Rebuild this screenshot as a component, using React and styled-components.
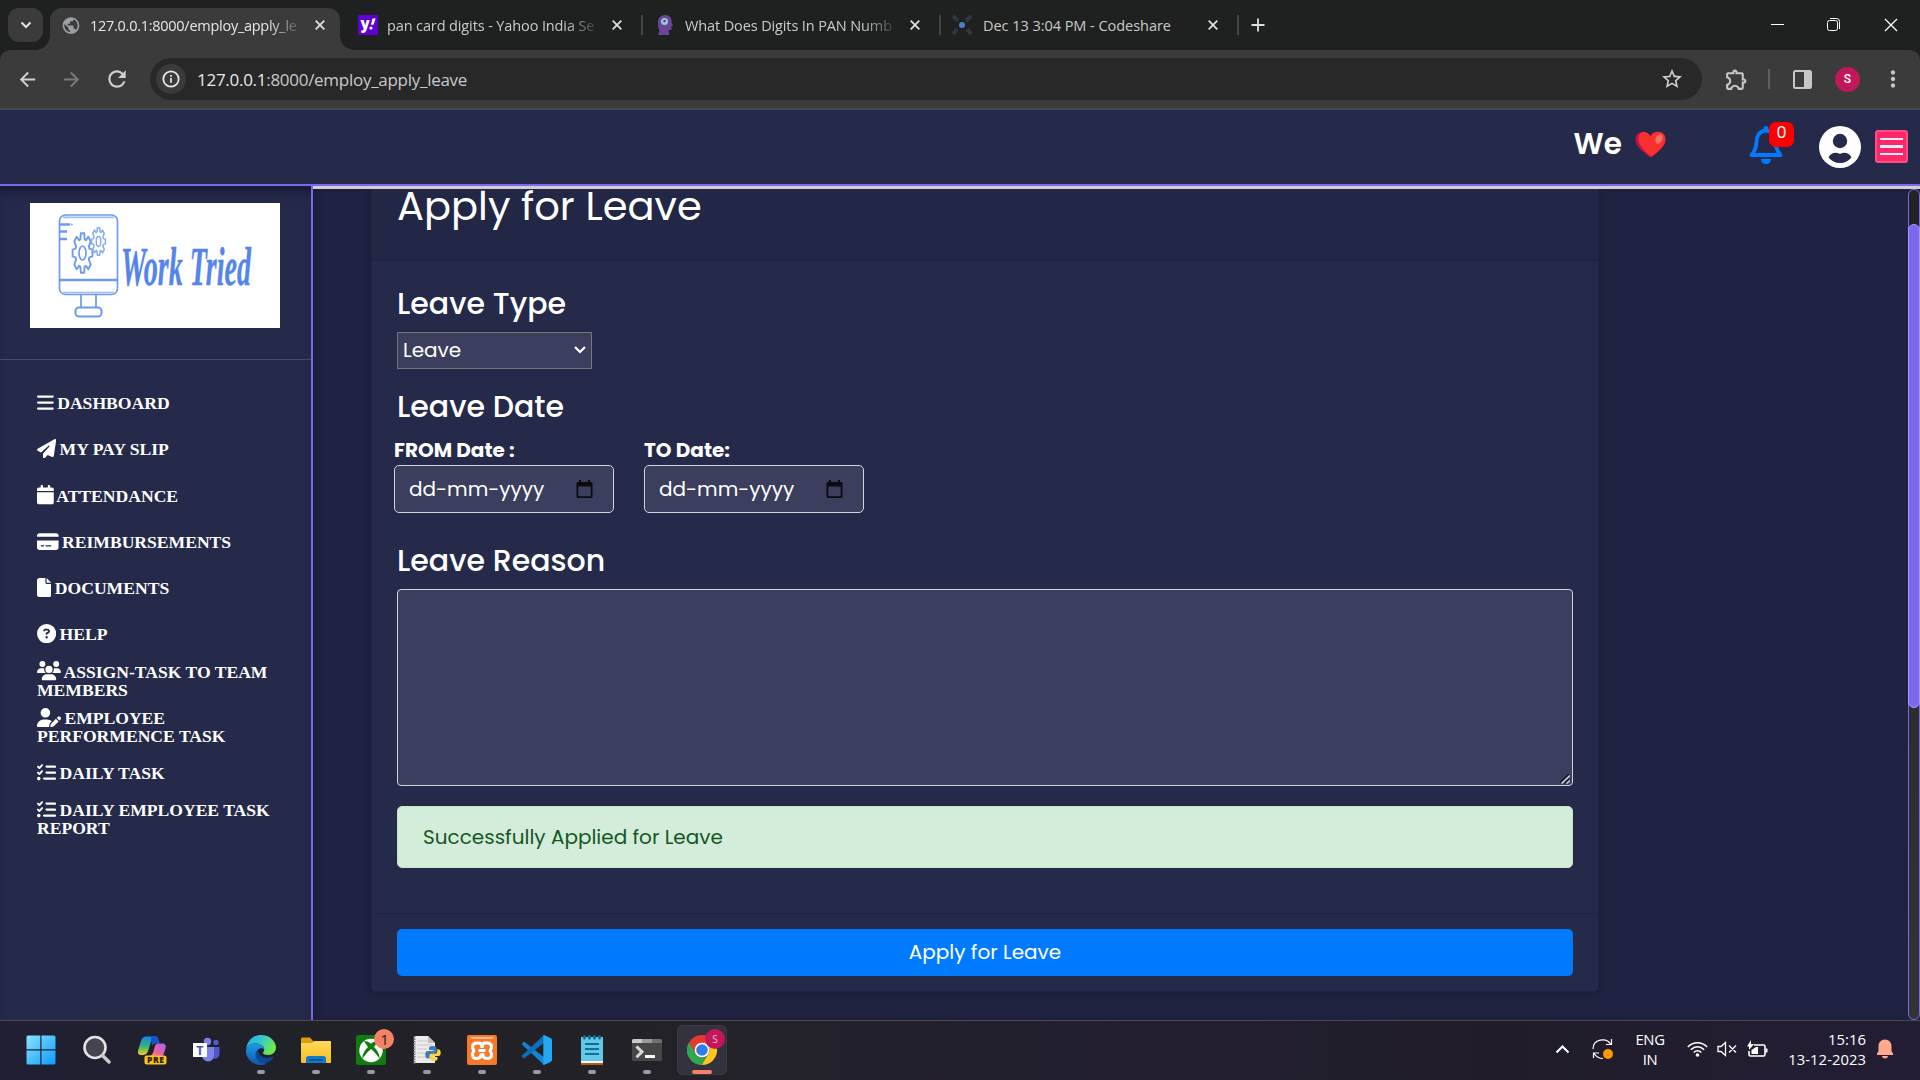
import React from 'react';
import styled, { createGlobalStyle } from 'styled-components';
import { FaBars, FaPaperPlane, FaCalendar, FaCreditCard, FaFile, FaCircleQuestion, FaUsers, FaUserPen, FaListCheck } from 'react-icons/fa6';
import { MdOutlineExtension, MdArrowBack, MdArrowForward, MdRefresh, MdStarOutline, MdMoreVert, MdPublic } from 'react-icons/md';

const ui = `"Segoe UI", "Open Sans", "Noto Sans", sans-serif`;
const poppins = `Poppins, Inter, "Noto Sans", sans-serif`;

const Global = createGlobalStyle`
  *, *::before, *::after { box-sizing: border-box; }
  html, body { margin: 0; overflow: hidden; background: #1f2240; }
  body { font-family: ${poppins}; color: #fff; }
`;
const Screen = styled.div`
  width: 1920px; height: 1080px; display: flex; flex-direction: column; overflow: hidden;
`;

/* ---------- browser chrome ---------- */
const TabStrip = styled.div`
  height: 50px; flex: none; background: #1f2120; display: flex; align-items: flex-start; padding: 8px 0 0 8px; font-family: ${ui};
`;
const TabSearch = styled.div`
  width: 35px; height: 34px; border-radius: 11px; background: #3b3b3b; display: flex; align-items: center; justify-content: center;
`;
const Tab = styled.div`
  position: relative; display: flex; align-items: center; height: ${p => (p.$active ? 42 : 34)}px; width: ${p => p.$w}px; margin-left: ${p => p.$ml || 0}px;
  padding: 0 ${p => p.$pr || 13}px ${p => (p.$active ? 8 : 0)}px 11px; border-radius: 12px 12px 0 0;
  background: ${p => (p.$active ? '#3b3b3b' : 'transparent')};
  &::before, &::after {
    content: ''; display: ${p => (p.$active ? 'block' : 'none')}; position: absolute; bottom: 0; width: 14px; height: 14px;
  }
  &::before { left: -14px; background: radial-gradient(circle at 0 0, transparent 13.5px, #3b3b3b 14px); }
  &::after { right: -14px; background: radial-gradient(circle at 100% 0, transparent 13.5px, #3b3b3b 14px); }
`;
const TabIcon = styled.span`
  flex: none; display: flex; justify-content: center; width: 20px;
`;
const TabTitle = styled.span`
  flex: 1; margin-left: ${p => p.$ml || 9}px; padding-top: 1px; white-space: nowrap; font-size: 14.5px; line-height: 22px; color: ${p => (p.$active ? '#e6e6e6' : '#c9cac9')};
  letter-spacing: ${p => p.$ls || 0}px;
  ${p => p.$fade && 'mask-image: linear-gradient(90deg, #000 calc(100% - 32px), rgba(0,0,0,.12));'}
`;
const CloseSlot = styled.span`
  flex: none; display: flex; width: 12px; margin-left: 15px;
`;
const Separator = styled.span`
  flex: none; width: 2px; height: 20px; margin-top: 7px; background: #414242;
`;
const NewTab = styled.span`
  display: flex; margin: 10px 0 0 12px;
`;
const WindowButtons = styled.div`
  margin-left: auto; display: flex; gap: 43px; padding: 10px 22px 0 0;
`;
const ToolbarBack = styled.div`
  background: #1f2120; flex: none;
`;
const Toolbar = styled.div`
  height: 60px; background: #3b3b3b; border-bottom: 2px solid #474b4e; display: flex; align-items: center; padding: 0 0 0 16px; font-family: ${ui};
  border-radius: 10px 10px 0 0;
`;
const Nav = styled.div`
  flex: none; display: flex; align-items: center; gap: 21px; width: 134px; color: #d0d0d0;
`;
const Omnibox = styled.div`
  flex: none; width: 1552px; height: 42px; border-radius: 21px; background: #282828; display: flex; align-items: center; padding: 0 18px 0 6px;
`;
const SiteInfo = styled.div`
  width: 30px; height: 30px; border-radius: 50%; background: #3b3b3b; display: flex; align-items: center; justify-content: center;
`;
const Url = styled.span`
  flex: 1; margin-left: 11px; padding-top: 1px; font-size: 17px; line-height: 24px; letter-spacing: -0.28px; color: #e8e8e8;
  span { color: #c8c9ca; }
`;
const ToolbarEnd = styled.div`
  flex: none; display: flex; align-items: center; color: #c7c7c7;
`;
const ToolbarSlot = styled.span`
  display: flex; flex: none; margin-left: ${p => p.$ml}px;
`;
const ToolbarRule = styled.span`
  width: 2px; height: 20px; background: #5f5f5f;
`;
const Profile = styled.span`
  width: 25px; height: 25px; border-radius: 50%; background: #c2185b; color: #fff; font: 500 12px/25px Roboto, sans-serif; text-align: center;
`;

/* ---------- application header ---------- */
const Header = styled.header`
  height: 76px; flex: none; background: #252a4b; border-bottom: 2px solid #7b68ee; display: flex; align-items: center; justify-content: flex-end; padding: 0 12px 1px 0;
`;
const Slogan = styled.div`
  display: flex; align-items: center; gap: 13px; font-size: 29.5px; font-weight: 600; line-height: 40px; margin-right: 83px; padding-bottom: 5px;
`;
const BellWrap = styled.div`
  position: relative; width: 34px; height: 42px; margin-right: 36px;
`;
const Badge = styled.span`
  position: absolute; left: 20px; top: -4px; width: 25px; height: 25px; border-radius: 7px; background: #f00; font-size: 16px; line-height: 22px; text-align: center;
`;
const AvatarSlot = styled.div`
  display: flex; margin-right: 14px;
`;
const MenuButton = styled.div`
  width: 33px; height: 33px; border: 2px solid #ff4d88; border-radius: 3px; background: #ff2768; display: flex; flex-direction: column; justify-content: center; align-items: center; gap: 5px;
`;
const MenuBar = styled.span`
  width: 23px; height: 2.5px; background: #d9eef8;
`;

/* ---------- page body ---------- */
const Body = styled.div`
  flex: 1; min-height: 0; display: flex;
`;
const Sidebar = styled.aside`
  width: 313px; flex: none; background: #252a4b; border-right: 2px solid #7b68ee; box-shadow: inset 0 12px 12px -8px rgba(10, 12, 28, 0.6);
`;
const LogoBox = styled.div`
  height: 174px; padding: 17px 0 0 30px; border-bottom: 1px solid #464a5b;
`;
const LogoCard = styled.div`
  width: 250px; height: 125px; background: #fff; display: flex;
`;
const Menu = styled.nav`
  display: grid; grid-auto-rows: 46.25px; padding: 20px 20px 0 37px;
`;
const MenuItem = styled.div`
  display: flex; align-items: center; font: bold 17.6px/18px "Times New Roman", "Liberation Serif", serif; text-transform: uppercase;
  svg { width: ${p => p.$iw}em; height: 1em; font-size: 19.2px; vertical-align: -3px; margin: -4px -1px 0 0; }
`;
const Content = styled.main`
  flex: 1; border-top: 3px solid #d2cfd4; display: flex; background: #1f2240; min-width: 0;
`;
const Scroller = styled.div`
  flex: 1; height: 831px; overflow: hidden; padding-left: 58px; box-shadow: inset 5px 0 6px -3px rgba(20,22,40,.5);
`;
const Card = styled.section`
  width: 1228px; height: 803px; background: #252a4b; border: 1px solid #20253f; border-top: 0; border-radius: 0 0 5px 5px; display: flex; flex-direction: column;
  box-shadow: 0 0 6px rgba(15, 20, 40, .5);
`;
const CardHeader = styled.div`
  height: 72px; flex: none; background: #212744; border-bottom: 1px solid #1c2240; padding-left: 25px;
`;
const Title = styled.h1`
  margin: -7px 0 0; font-size: 40px; font-weight: 400; line-height: 48px; white-space: nowrap;
`;
const CardBody = styled.div`
  flex: 1; padding: 0 25px; display: flex; flex-direction: column;
`;
const SectionTitle = styled.h2`
  margin: ${p => p.$mt}px 0 0 0; font-size: 30px; font-weight: 500; line-height: 36px; white-space: nowrap;
`;
const Select = styled.div`
  width: 195px; height: 37px; margin-top: 10px; border: 1px solid #767676; background: #3b3e5c; display: flex; align-items: center; justify-content: space-between; padding: 0 4px 1px 5px; font-size: 20px;
`;
const Dates = styled.div`
  display: flex; gap: 30px; margin: 11px 0 0 -3px;
`;
const DateField = styled.label`
  width: 220px; display: flex; flex-direction: column; font-size: 20px; font-weight: 700; line-height: 29px;
`;
const DateInput = styled.span`
  height: 48px; border: 1px solid #ced4da; border-radius: 5px; background: #3b3e5c; display: flex; align-items: center; justify-content: space-between; padding: 1px 20px 0 14px; font-size: 20px; font-weight: 400;
`;
const Reason = styled.div`
  height: 197px; margin-top: 10px; border: 1px solid #ced4da; border-radius: 4px; background: #3b3e5c; display: flex; align-items: flex-end; justify-content: flex-end; padding: 1px 2px;
`;
const Alert = styled.div`
  height: 62px; margin-top: 20px; border: 1px solid #c3e6cb; border-radius: 5px; background: #d4edda; color: #155724; font-size: 20px; line-height: 61px; padding-left: 25px;
`;
const CardFooter = styled.div`
  height: 78px; flex: none; border-top: 1px solid #20253f; padding: 15px 25px;
`;
const Submit = styled.button`
  display: block; width: 100%; height: 47px; border: 0; border-radius: 5px; background: #007bff; color: #fff; font-family: ${poppins}; font-size: 20px; line-height: 46px; padding: 0 0 1px;
`;
const ScrollTrack = styled.div`
  width: 12px; height: 831px; border: 1px solid #7b68ee; border-radius: 6px; background: linear-gradient(#222, #333); padding-top: 34px;
`;
const ScrollThumb = styled.div`
  height: 484px; margin: 0 -1px; border: 1px solid #a99cf5; border-radius: 6px; background: #7b68ee;
`;

/* ---------- taskbar ---------- */
const Taskbar = styled.footer`
  height: 60px; flex: none; background: linear-gradient(90deg, #201f34 0%, #212128 15%, #232228 35%, #231f30 60%, #201d28 78%, #231d35 100%); border-top: 1px solid #4a4a4d; display: flex; padding-left: 16px; font-family: ${ui};
`;
const TaskApp = styled.div`
  position: relative; width: 50px; height: 50px; margin: 4px 5.08px 0 0; border-radius: 6px; display: flex; align-items: center; justify-content: center;
  background: ${p => (p.$active ? '#33323e' : 'transparent')};
  box-shadow: ${p => (p.$active ? 'inset 0 0 0 1px #3b3a45' : 'none')};
  &::after {
    content: ''; position: absolute; bottom: 1px; left: 50%; transform: translateX(-50%); height: 4px; border-radius: 2px;
    width: ${p => (p.$active ? 20 : p.$open ? 8 : 0)}px; background: ${p => (p.$active ? '#f58166' : '#9a9aa0')};
  }
`;
const AppBadge = styled.span`
  position: absolute; left: 28px; top: 4px; width: 20px; height: 20px; border-radius: 50%; background: ${p => p.$bg}; color: ${p => p.$fg}; font-size: ${p => p.$fs}px; line-height: 20px; text-align: center;
`;
const Tray = styled.div`
  margin-left: auto; display: flex; align-items: center; padding: 0 27px 3px 0;
`;
const TrayText = styled.div`
  font-size: 14.8px; line-height: 20px; text-align: ${p => p.$align}; width: ${p => p.$w}px; margin-right: ${p => p.$mr}px; letter-spacing: ${p => p.$ls}px; white-space: nowrap;
`;
const TraySlot = styled.span`
  display: flex; margin-right: ${p => p.$mr}px;
`;

const Cross = ({ size = 10, sw = 1.8, color = '#dedede' }) => (
  <svg width={size} height={size} viewBox="0 0 10 10"><path d="M.7.7l8.6 8.6M9.3.7L.7 9.3" stroke={color} strokeWidth={sw} fill="none" /></svg>
);

const gearPath = (cx, cy, rx, ry) => {
  const pts = [];
  for (let i = 0; i < 8; i++) {
    [[-0.3, 0.72], [-0.17, 1], [0.17, 1], [0.3, 0.72]].forEach(([o, r]) => {
      const a = (i * Math.PI) / 4 + o;
      pts.push(`${(cx + Math.sin(a) * rx * r).toFixed(1)} ${(cy - Math.cos(a) * ry * r).toFixed(1)}`);
    });
  }
  return `M${pts.join('L')}Z`;
};

const Logo = () => (
  <svg width="250" height="125" viewBox="0 0 250 125" fill="none" stroke="#6d9bee" strokeWidth="1.700">
    <rect x="29.500" y="12" width="58" height="79.500" rx="6" />
    <path d="M33 14.300h51M33 89.500h51" stroke="#9dbcf5" />
    <path d="M30 77h57" strokeWidth="2.400" />
    <path d="M30 21.500h10M30 28.500h7M30 36h7" strokeWidth="2.400" />
    <circle cx="41.800" cy="21.500" r=".6" strokeWidth="1" />
    <path d="M51 92v12M66 92v12" />
    <rect x="45.500" y="104.500" width="26" height="9" rx="3.500" strokeWidth="2" />
    <path d={gearPath(52.5, 50, 10, 20)} strokeLinejoin="round" strokeWidth="1.900" />
    <ellipse cx="52.500" cy="50" rx="3.500" ry="7" />
    <path d={gearPath(68.5, 38.5, 7, 14)} strokeLinejoin="round" stroke="#86abf1" strokeWidth="1.500" />
    <ellipse cx="68.500" cy="38.500" rx="2.300" ry="5" stroke="#86abf1" strokeWidth="1.400" />
    <text x="91" y="82" textLength="130" lengthAdjust="spacingAndGlyphs" fill="#5585ea" stroke="#5585ea" strokeWidth=".4" fontFamily="'Liberation Serif', serif" fontStyle="italic" fontWeight="700" fontSize="54">Work Tried</text>
  </svg>
);

const menu = [
  [FaBars, 0.875, 'Dashboard'],
  [FaPaperPlane, 1, 'My Pay Slip'],
  [FaCalendar, 0.875, 'Attendance'],
  [FaCreditCard, 1.125, 'Reimbursements'],
  [FaFile, 0.75, 'Documents'],
  [FaCircleQuestion, 1, 'Help'],
  [FaUsers, 1.25, 'Assign-Task to Team Members'],
  [FaUserPen, 1.25, 'Employee Performence Task'],
  [FaListCheck, 1, 'Daily Task'],
  [FaListCheck, 1, 'Daily Employee Task Report'],
];

const CalendarGlyph = () => (
  <svg width="17" height="19" viewBox="0 0 17 19"><path d="M3 0h2v2h7V0h2v2h1a1.500 1.500 0 0 1 1.500 1.500v13A1.500 1.500 0 0 1 15 18H2a1.500 1.500 0 0 1-1.500-1.500v-13A1.500 1.500 0 0 1 2 2h1zM2.300 6.500v9.800h12.400V6.500z" fill="#0b0b10" fillRule="evenodd" /></svg>
);

const WindowsIcon = () => (
  <svg width="30" height="30" viewBox="0 0 30 30">
    <defs><linearGradient id="win" x1="0" y1="0" x2="1" y2="1"><stop offset="0" stopColor="#8be3ff" /><stop offset="1" stopColor="#0a9bff" /></linearGradient></defs>
    <path d="M2 .5h12.300v13.800H.5V2A1.500 1.500 0 0 1 2 .5zM15.500.5H28A1.500 1.500 0 0 1 29.500 2v12.300h-14zM.5 15.500h13.800v14H2A1.500 1.500 0 0 1 .5 28zM15.500 15.500h14V28a1.500 1.500 0 0 1-1.500 1.500H15.500z" fill="url(#win)" />
  </svg>
);
const SearchIcon = () => (
  <svg width="30" height="30" viewBox="0 0 30 30" fill="none"><circle cx="14" cy="12.500" r="10.500" fill="#46454f" stroke="#e4e4e6" strokeWidth="2.600" /><path d="M21.500 20.500l6.500 6.500" stroke="#c9c9cd" strokeWidth="3.500" strokeLinecap="round" /></svg>
);
const CopilotIcon = () => (
  <svg width="32" height="32" viewBox="-2 0 32 32">
    <defs>
      <linearGradient id="cpA" x1="0" y1="0" x2="0" y2="1"><stop offset="0" stopColor="#1688e8" /><stop offset=".5" stopColor="#2fb07e" /><stop offset="1" stopColor="#f4cf1a" /></linearGradient>
      <linearGradient id="cpB" x1="1" y1="0" x2="0" y2="1"><stop offset="0" stopColor="#a066f5" /><stop offset=".6" stopColor="#ef5fa0" /><stop offset="1" stopColor="#ffa04d" /></linearGradient>
    </defs>
    <path d="M9 2.500h10c-4 0-5 5-6.500 10S10 21 6 21H4c-3 0-3.500-2.500-2.800-5L4 7c1-3 2.500-4.500 5-4.500z" fill="url(#cpA)" />
    <path d="M12 2h6c2.500 0 3.200 2 4 4.500l.8 3h-4c-2 0-3 1-3.500 2.500C14 7 15 4 12 2z" fill="#1556c8" />
    <path d="M20 9.500h5.500c3 0 3.800 2.500 3 5L26 22H12c3.500 0 4-3 5-6.500s1.500-6 3-6z" fill="url(#cpB)" />
    <rect x="7.500" y="21.500" width="22" height="9" rx="2" fill="#fcc419" />
    <text x="10" y="29" fontFamily="'Open Sans', sans-serif" fontWeight="800" fontSize="8.500" textLength="17" fill="#2a2108">PRE</text>
  </svg>
);
const TeamsIcon = () => (
  <svg width="30" height="30" viewBox="0 0 30 30">
    <circle cx="16.500" cy="6.500" r="3.700" fill="#7b83eb" /><circle cx="25" cy="7.500" r="2.700" fill="#5059c9" />
    <path d="M21 12h7.500v7.500a5 5 0 0 1-7.500 3.500z" fill="#5059c9" /><path d="M11 12h12v8a6 6 0 0 1-12 1z" fill="#7b83eb" />
    <rect x="2" y="8" width="14" height="14" fill="#fff" /><text x="5.300" y="19.500" fontFamily="'Open Sans', sans-serif" fontWeight="700" fontSize="12.500" fill="#4b53bc">T</text>
  </svg>
);
const EdgeIcon = () => (
  <svg width="30" height="30" viewBox="0 0 30 30">
    <defs>
      <linearGradient id="edA" x1="0" y1="0" x2="1" y2=".4"><stop offset="0" stopColor="#25a9e8" /><stop offset=".5" stopColor="#35c6d0" /><stop offset="1" stopColor="#6bea4e" /></linearGradient>
      <linearGradient id="edB" x1="0" y1="0" x2="0" y2="1"><stop offset="0" stopColor="#1c9be6" /><stop offset="1" stopColor="#0f55a8" /></linearGradient>
    </defs>
    <path d="M.2 14C1 6 7 0 15 0c9 0 15 6.500 15 12.500 0 4.500-3.500 7.500-7.500 7.500-3.500 0-5.500-1-5.500-2.300 0-.8 1.200-1.400 1.200-3.200C18.200 11 14.500 8.500 10 8.500 5 8.500 1.500 10.500.2 14z" fill="url(#edA)" />
    <path d="M0 16c0-4.500 4-7.500 10-7.500 5 0 8.200 3 8.200 6-2-2.500-7.700-1.500-7.700 4.500 0 5 4.500 9.500 10 9.500-1.700 1-3.600 1.500-5.500 1.500C6.500 30 0 23.500 0 16z" fill="url(#edB)" />
    <path d="M12.500 14c-3.500 2-4 7-1 11 3.500 4.700 11.500 4.500 16-2.500.5-.8-.2-1-.8-.7-5 2.200-12.500.7-14-3.300-.6-1.600-.5-3-.2-4.500z" fill="#0d4896" />
  </svg>
);
const FolderIcon = () => (
  <svg width="30" height="30" viewBox="0 0 30 30">
    <defs><linearGradient id="fo" x1="0" y1="0" x2="0" y2="1"><stop offset="0" stopColor="#ffd95c" /><stop offset="1" stopColor="#f9bd22" /></linearGradient></defs>
    <path d="M0 4a1.500 1.500 0 0 1 1.500-1.500H9l3.500 4H30V12H0z" fill="#dd9d0d" /><path d="M0 8h11l2.500-2H29a1 1 0 0 1 1 1v21H1a1 1 0 0 1-1-1z" fill="url(#fo)" />
    <path d="M5 28v-4.500a2.500 2.500 0 0 1 2.500-2.500h15a2.500 2.500 0 0 1 2.500 2.500V28z" fill="#1379cb" /><path d="M8.500 24.800h13" stroke="#0a4b86" strokeWidth="1.500" />
  </svg>
);
const XboxIcon = () => (
  <svg width="30" height="30" viewBox="0 0 30 30">
    <rect width="30" height="30" rx="2" fill="#107c10" /><circle cx="15" cy="15.500" r="11.700" fill="#fff" />
    <path d="M8 6.500c3-.8 5 .5 7 2.300 2-1.800 4-3.100 7-2.300l-4 5.500c4 4 6 8.500 5.500 11.500-2-3-5-6.500-8.500-9.500-3.500 3-6.500 6.500-8.500 9.500C6 20.500 8 16 12 12z" fill="#107c10" />
  </svg>
);
const PyFileIcon = () => (
  <svg width="30" height="30" viewBox="0 0 30 30">
    <path d="M2 1h14l7 7v20H2z" fill="#ececec" /><path d="M16 1l7 7h-7z" fill="#bdbdbd" />
    <path d="M2.500 1v28" stroke="#777" strokeWidth="2" strokeDasharray="1.500 1" /><path d="M5 6h10M5 10h15M5 14h10M5 18h9M5 22h9" stroke="#c6c6c6" />
    <path d="M20.500 11c-3 0-3.500 1-3.500 2.500V15h4.500v1H16c-2 0-2.700 1.500-2.700 4s1 3.500 2.700 3.500h1.500V21c0-1.500 1-2.300 2.500-2.300h3c1 0 1.700-.8 1.700-1.800v-3.400C24.700 12 23.500 11 20.500 11z" fill="#3f7cb4" />
    <path d="M22 26c3 0 3.500-1 3.500-2.200V22H21v-1h5c2 0 2.700-1 2.700-3.300 0-2.500-1-3.500-2.700-3.500h-.8v2.300c0 1.500-1 2.500-2.500 2.500h-3c-1 0-1.700.6-1.700 1.700V23c0 2 1.500 3 4 3z" fill="#ffd23f" />
  </svg>
);
const XamppIcon = () => (
  <svg width="30" height="30" viewBox="0 0 30 30">
    <rect width="30" height="30" rx="2" fill="#f6792a" /><path d="M3 2h24l-2 2H5z" fill="#fdb98c" />
    <path d="M10.500 8h1.500c2 0 2.500 1.500 2.500 3.500h1c0-2 .5-3.500 2.500-3.500h2c3.500 0 4.500 2 4.500 4 0 2.500-1.500 3-1.500 3.800s1.500 1.200 1.500 3.700c0 2.500-1.500 4-4 4s-4.500-1-4.500-4h-2c0 3-2 4-4.500 4s-4-1.500-4-4c0-2.500 1.500-3 1.500-3.700S5.500 14.500 5.500 12c0-2.500 1.500-4 5-4z" fill="none" stroke="#fff" strokeWidth="3" strokeLinejoin="round" />
    <path d="M11.500 15.500h7" stroke="#fff" strokeWidth="3" />
  </svg>
);
const CodeIcon = () => (
  <svg width="30" height="30" viewBox="0 0 30 30">
    <path d="M2 6.500L0 8.500v1L22 30l1-7z" fill="#1184d4" /><path d="M2 23.500L0 21.500v-1L22 0l1 7z" fill="#0c6fb8" />
    <path d="M22 0l6.500 3A2.500 2.500 0 0 1 30 5.200v19.600a2.500 2.500 0 0 1-1.500 2.200L22 30c-.8-.3-.7-.8-.7-1.500v-27C21.300.8 21.200.3 22 0z" fill="#24a8f2" />
  </svg>
);
const NotepadIcon = () => (
  <svg width="30" height="30" viewBox="0 0 30 30">
    <rect x="4" y="26" width="22" height="4" fill="#b35a14" /><rect x="4" y="24" width="22" height="4" fill="#f4f4f4" />
    <rect x="4" y="2" width="22" height="24" fill="#63c8e8" /><path d="M7.500 1.500v1.500M12.500 1.500v1.500M17.500 1.500v1.500M22.500 1.500v1.500" stroke="#0f6f94" strokeWidth="3" strokeLinecap="round" />
    <path d="M8 9h14M8 14h14M8 19h14" stroke="#0f6f94" strokeWidth="2" />
  </svg>
);
const TerminalIcon = () => (
  <svg width="30" height="30" viewBox="0 0 30 30">
    <rect y="4" width="30" height="22" rx="1.500" fill="#474747" /><path d="M0 8V5.500A1.500 1.500 0 0 1 1.500 4H10v4z" fill="#c9c9c9" /><path d="M10 4h10v4H10z" fill="#9a9a9a" /><path d="M20 4h8.500A1.500 1.500 0 0 1 30 5.500V8H20z" fill="#707070" />
    <path d="M4.500 11.500l5.500 5.300-5.500 5.500" fill="none" stroke="#d9d9d9" strokeWidth="3" /><path d="M13 21.500h10" stroke="#fff" strokeWidth="3" />
  </svg>
);
const ChromeIcon = () => (
  <svg width="30" height="30" viewBox="0 0 30 30">
    <circle cx="15" cy="15" r="15" fill="#e33b2e" />
    <path d="M2 7.500A15 15 0 0 0 15 30l6.500-11.300a7.500 7.500 0 0 1-13 0z" fill="#2da94f" />
    <path d="M15 30A15 15 0 0 0 28 7.500H15a7.500 7.500 0 0 1 6.500 11.200z" fill="#fcc91b" />
    <circle cx="15" cy="15" r="7.300" fill="#fff" /><circle cx="15" cy="15" r="5.800" fill="#2f7de9" />
  </svg>
);

export default function App() {
  return (
    <Screen>
      <Global />
      <TabStrip>
        <TabSearch><svg width="12" height="8" viewBox="0 0 12 8"><path d="M1.500 1.500L6 6l4.500-4.500" stroke="#e3e3e3" strokeWidth="2" fill="none" /></svg></TabSearch>
        <Tab $active $w={290} $ml={7}>
          <TabIcon><MdPublic size={21} color="#9aa0a6" /></TabIcon>
          <TabTitle $active $fade $ls={-0.27}>127.0.0.1:8000/employ_apply_le</TabTitle>
          <CloseSlot><Cross /></CloseSlot>
        </Tab>
        <Tab $w={294} $ml={7} $pr={17}>
          <TabIcon><svg width="20" height="20" viewBox="0 0 20 20"><rect width="20" height="20" fill="#5f01d1" /><text x="2.500" y="14" fontFamily="'Open Sans', sans-serif" fontWeight="800" fontSize="15" fill="#fff">y</text><path d="M14.500 3.500h3.200l-2.200 6.300h-2.600z" fill="#fff" /><circle cx="13" cy="13" r="1.600" fill="#fff" /></svg></TabIcon>
          <TabTitle $fade $ls={-0.12}>pan card digits - Yahoo India Se</TabTitle>
          <CloseSlot><Cross /></CloseSlot>
        </Tab>
        <Separator />
        <Tab $w={296} $pr={17}>
          <TabIcon><svg width="20" height="20" viewBox="0 0 20 20"><path d="M11 0c5 0 6.500 3 6.500 7l1.500 3.500-1.500.8V15h-3l1 5H4l1.500-4.500C4 13 4 10 4 7c0-4 3-7 7-7z" fill="#6b4596" /><circle cx="10.500" cy="6.500" r="3.500" fill="#9cc3e2" /><circle cx="10.500" cy="6" r="1.300" fill="#2c5e86" /></svg></TabIcon>
          <TabTitle $fade $ml={11} $ls={-0.12}>What Does Digits In PAN Numb</TabTitle>
          <CloseSlot><Cross /></CloseSlot>
        </Tab>
        <Separator />
        <Tab $w={296} $pr={17}>
          <TabIcon><svg width="20" height="20" viewBox="0 0 20 20"><path d="M1 1l5 5M19 1l-5 5M1 19l4-5M19 19l-4-5" stroke="#313741" strokeWidth="4" /><circle cx="10" cy="10" r="3" fill="#4a7fd0" /></svg></TabIcon>
          <TabTitle $ml={11} $ls={-0.04}>Dec 13 3:04 PM - Codeshare</TabTitle>
          <CloseSlot><Cross /></CloseSlot>
        </Tab>
        <Separator />
        <NewTab><svg width="14" height="14" viewBox="0 0 14 14"><path d="M7 .5v13M.5 7h13" stroke="#dedede" strokeWidth="1.800" /></svg></NewTab>
        <WindowButtons>
          <svg width="14" height="14" viewBox="0 0 14 14"><path d="M1 6.500h13" stroke="#fff" /></svg>
          <svg width="14" height="14" viewBox="0 0 14 14" fill="none" stroke="#fff"><rect x=".5" y="2.500" width="10" height="10" rx="2" /><path d="M3 .5h6.500a3 3 0 0 1 3 3V11" /></svg>
          <Cross size={14} sw={0.9} color="#fff" />
        </WindowButtons>
      </TabStrip>
      <ToolbarBack>
        <Toolbar>
          <Nav><MdArrowBack size={23} /><MdArrowForward size={23} color="#7a7a7a" /><MdRefresh size={26} /></Nav>
          <Omnibox>
            <SiteInfo><svg width="18" height="18" viewBox="0 0 18 18" fill="none" stroke="#e6e6e6"><circle cx="9" cy="9" r="7.700" strokeWidth="1.800" /><path d="M9 8v4.800M9 5v1.700" strokeWidth="1.800" /></svg></SiteInfo>
            <Url>127.0.0.1<span>:8000/employ_apply_leave</span></Url>
            <MdStarOutline size={24} color="#d0d0d0" />
          </Omnibox>
          <ToolbarEnd>
            <ToolbarSlot $ml={22}><MdOutlineExtension size={25} /></ToolbarSlot>
            <ToolbarSlot $ml={19}><ToolbarRule /></ToolbarSlot>
            <ToolbarSlot $ml={23}>
              <svg width="19" height="19" viewBox="0 0 19 19"><rect x="1" y="1" width="17" height="17" rx="1.500" fill="none" stroke="currentColor" strokeWidth="2" /><path d="M11 1h7v17h-7z" fill="currentColor" /></svg>
            </ToolbarSlot>
            <ToolbarSlot $ml={23}><Profile>S</Profile></ToolbarSlot>
            <ToolbarSlot $ml={20}><MdMoreVert size={26} /></ToolbarSlot>
          </ToolbarEnd>
        </Toolbar>
      </ToolbarBack>

      <Header>
        <Slogan>
          <span>We</span>
          <svg width="31" height="27" viewBox="0 0 31 27">
            <path d="M15.500 26.500C8 21 .5 15 .5 8.500.5 4 3.800.8 8 .8c3.500 0 6 1.700 7.500 4.400C17 2.500 19.500.8 23 .8c4.200 0 7.500 3.200 7.500 7.700 0 6.500-7.500 12.500-15 18z" fill="#c3114c" />
            <path d="M16.500 25.800C10 21 3.500 14 3.500 8 3.500 4 5.500 1.300 8.500.9c3.200 0 5.500 1.600 7 4.300C17 2.500 19.500.8 23 .8c4.200 0 7.500 3.200 7.500 7.700 0 6.300-7 12-14 17.300z" fill="#f8312f" />
            <ellipse cx="24" cy="8" rx="3.300" ry="5" transform="rotate(28 24 8)" fill="#f37366" />
          </svg>
        </Slogan>
        <BellWrap>
          <svg width="34" height="40" viewBox="0 0 34 40"><path d="M17 4.500C9.500 5 7.500 11 7.500 16c0 6-2 9.500-5 13h29c-3-3.500-5-7-5-13 0-5-2-11-9.500-11.500z" fill="none" stroke="#007bff" strokeWidth="3.800" strokeLinejoin="round" /><circle cx="17" cy="2.500" r="2.500" fill="#007bff" /><path d="M12 33h10c0 3.500-2 5-5 5s-5-1.500-5-5z" fill="#007bff" /></svg>
          <Badge>0</Badge>
        </BellWrap>
        <AvatarSlot>
          <svg width="42" height="42" viewBox="0 0 42 42"><circle cx="21" cy="21" r="21" fill="#fff" /><circle cx="21" cy="15" r="7.200" fill="#252a4b" /><path d="M9.500 31.500c2-4.500 7-6 11.500-3.500 4.500-2.500 9.500-1 11.500 3.500-3 3.500-6.500 5.500-11.500 5.500s-8.500-2-11.500-5.500z" fill="#252a4b" /></svg>
        </AvatarSlot>
        <MenuButton><MenuBar /><MenuBar /><MenuBar /></MenuButton>
      </Header>

      <Body>
        <Sidebar>
          <LogoBox><LogoCard><Logo /></LogoCard></LogoBox>
          <Menu>
            {menu.map(([Icon, w, label]) => (
              <MenuItem key={label} $iw={w}><span><Icon /> {label}</span></MenuItem>
            ))}
          </Menu>
        </Sidebar>
        <Content>
          <Scroller>
            <Card>
              <CardHeader><Title>Apply for Leave</Title></CardHeader>
              <CardBody>
                <SectionTitle $mt={25}>Leave Type</SectionTitle>
                <Select>Leave<svg width="14" height="10" viewBox="0 0 14 10"><path d="M2 2l5 5 5-5" stroke="#fff" strokeWidth="2.200" fill="none" /></svg></Select>
                <SectionTitle $mt={20}>Leave Date</SectionTitle>
                <Dates>
                  <DateField>FROM Date :<DateInput>dd-mm-yyyy<CalendarGlyph /></DateInput></DateField>
                  <DateField>TO Date:<DateInput>dd-mm-yyyy<CalendarGlyph /></DateInput></DateField>
                </Dates>
                <SectionTitle $mt={30}>Leave Reason</SectionTitle>
                <Reason><svg width="10" height="10" viewBox="0 0 10 10"><path d="M0 8.500L9 0M5 9L9 5" stroke="#15172a" strokeWidth="1.500" /><path d="M1.500 9.500L10 1.500M6.500 9.500L10 6.500" stroke="#d5d5dc" strokeWidth="1.500" /></svg></Reason>
                <Alert>Successfully Applied for Leave</Alert>
              </CardBody>
              <CardFooter><Submit>Apply for Leave</Submit></CardFooter>
            </Card>
          </Scroller>
          <ScrollTrack><ScrollThumb /></ScrollTrack>
        </Content>
      </Body>

      <Taskbar>
        <TaskApp><WindowsIcon /></TaskApp>
        <TaskApp><SearchIcon /></TaskApp>
        <TaskApp><CopilotIcon /></TaskApp>
        <TaskApp><TeamsIcon /></TaskApp>
        <TaskApp $open><EdgeIcon /></TaskApp>
        <TaskApp $open><FolderIcon /></TaskApp>
        <TaskApp $open><XboxIcon /><AppBadge $bg="#f58166" $fg="#222" $fs={15}>1</AppBadge></TaskApp>
        <TaskApp $open><PyFileIcon /></TaskApp>
        <TaskApp $open><XamppIcon /></TaskApp>
        <TaskApp $open><CodeIcon /></TaskApp>
        <TaskApp $open><NotepadIcon /></TaskApp>
        <TaskApp $open><TerminalIcon /></TaskApp>
        <TaskApp $active><ChromeIcon /><AppBadge $bg="#c2185b" $fg="#f6b8cf" $fs={10}>S</AppBadge></TaskApp>
        <Tray>
          <TraySlot $mr={22}><svg width="15" height="9" viewBox="0 0 15 9"><path d="M1.500 7.500l6-6 6 6" stroke="#fff" strokeWidth="2" fill="none" /></svg></TraySlot>
          <TraySlot $mr={21}><svg width="22" height="22" viewBox="0 0 22 22" fill="none" stroke="#fff" strokeWidth="1.200"><path d="M1 11C1 1.500 14 -1.500 19 6.500M19.500 1v5.500H14M11 20.500c-4 0-7-2-9-5M1.500 20v-5H7" /><circle cx="16" cy="16" r="5" fill="#ff9800" stroke="none" /></svg></TraySlot>
          <TrayText $w={30} $align="center" $mr={22} $ls={-0.3}>ENG<br />IN</TrayText>
          <TraySlot $mr={9}><svg width="21" height="16" viewBox="0 0 21 16" fill="none" stroke="#fff" strokeWidth="1.600"><path d="M.8 6c5.500-5.700 14-5.700 19.400 0M3.800 8.700c4-4 9.500-4 13.400 0M6.700 11.500c2.300-2.300 5.400-2.300 7.700 0" /><circle cx="10.500" cy="14" r="1.800" fill="#fff" stroke="none" /></svg></TraySlot>
          <TraySlot $mr={10}><svg width="20" height="16" viewBox="0 0 20 16" fill="none" stroke="#fff" strokeWidth="1.300"><path d="M1 5.500h3L8.500 1.500v13L4 10.500H1zM12 4.500l7 7M19 4.500l-7 7" /></svg></TraySlot>
          <TraySlot $mr={20}><svg width="21" height="18" viewBox="0 0 21 18"><path d="M7 5h9.500a1.500 1.500 0 0 1 1.500 1.500v8a1.500 1.500 0 0 1-1.500 1.500h-13A1.500 1.500 0 0 1 2 14.500V11" fill="none" stroke="#fff" strokeWidth="1.600" /><path d="M4.500 14V10L9 7h2v7zM18.500 8.500H20a.5.5 0 0 1 .5.5v3a.5.5 0 0 1-.5.5h-1.500zM4 0v4h3L2 10V6.500H0z" fill="#fff" /></svg></TraySlot>
          <TrayText $w={78} $align="right" $mr={11} $ls={0.05}>15:16<br />13-12-2023</TrayText>
          <svg width="16" height="20" viewBox="0 0 16 20"><path d="M8 .5c-4 0-6.500 3-6.500 6.500V12L0 14.500V16h16v-1.500L14.500 12V7C14.500 3.500 12 .5 8 .5zM5 17h6c0 1.500-1.200 2.500-3 2.500S5 18.500 5 17z" fill="#ffa98c" /></svg>
        </Tray>
      </Taskbar>
    </Screen>
  );
}
